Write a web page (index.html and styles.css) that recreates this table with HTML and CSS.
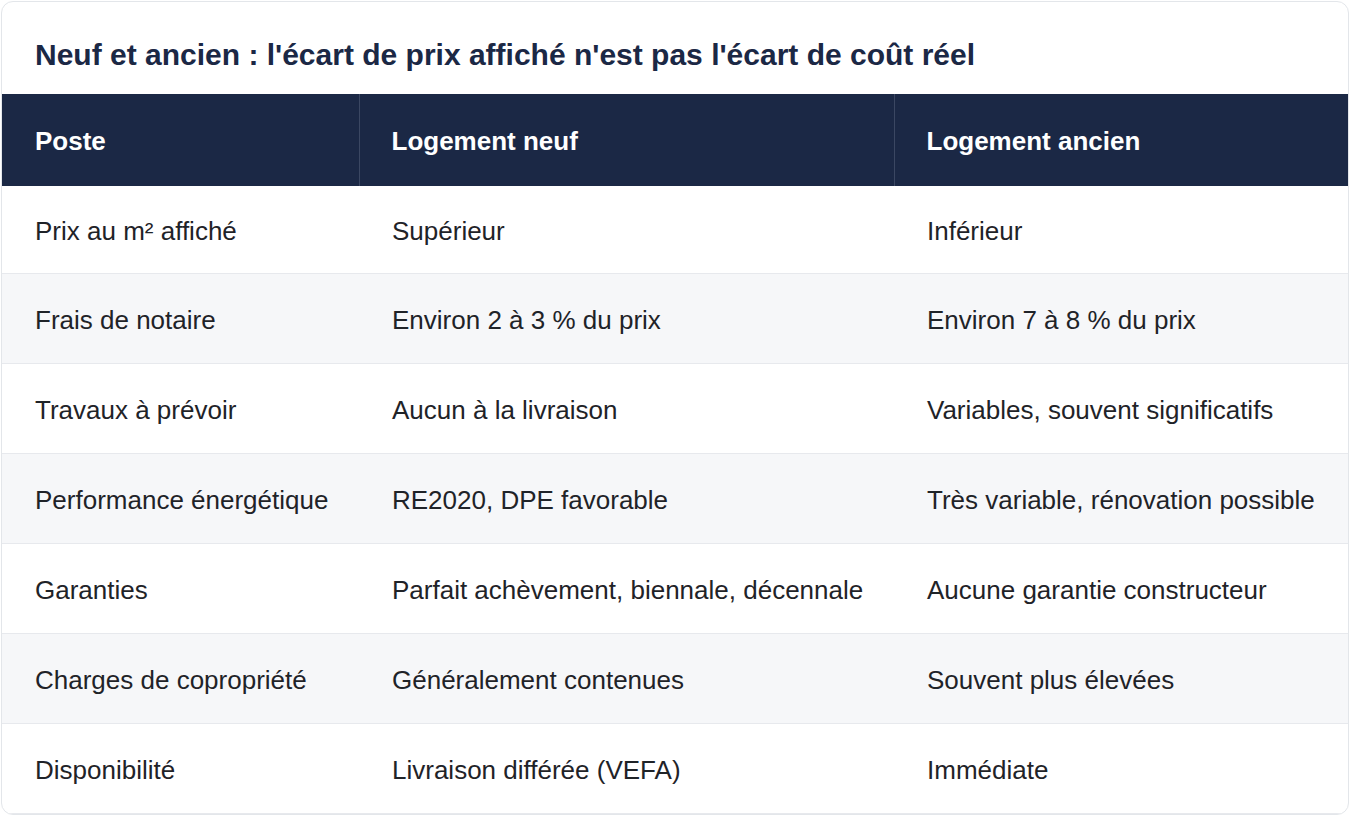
FILE: index.html
```html
<!DOCTYPE html>
<html lang="fr">
<head>
<meta charset="utf-8">
<link rel="stylesheet" href="styles.css">
</head>
<body>
<div class="card">
  <h2 class="title">Neuf et ancien : l'écart de prix affiché n'est pas l'écart de coût réel</h2>
  <table class="cmp">
    <colgroup>
      <col class="c1"><col class="c2"><col class="c3">
    </colgroup>
    <thead>
      <tr><th>Poste</th><th>Logement neuf</th><th>Logement ancien</th></tr>
    </thead>
    <tbody>
      <tr><td>Prix au m² affiché</td><td>Supérieur</td><td>Inférieur</td></tr>
      <tr><td>Frais de notaire</td><td>Environ 2 à 3 % du prix</td><td>Environ 7 à 8 % du prix</td></tr>
      <tr><td>Travaux à prévoir</td><td>Aucun à la livraison</td><td>Variables, souvent significatifs</td></tr>
      <tr><td>Performance énergétique</td><td>RE2020, DPE favorable</td><td>Très variable, rénovation possible</td></tr>
      <tr><td>Garanties</td><td>Parfait achèvement, biennale, décennale</td><td>Aucune garantie constructeur</td></tr>
      <tr><td>Charges de copropriété</td><td>Généralement contenues</td><td>Souvent plus élevées</td></tr>
      <tr><td>Disponibilité</td><td>Livraison différée (VEFA)</td><td>Immédiate</td></tr>
    </tbody>
  </table>
</div>
</body>
</html>
```

FILE: styles.css
```css
html, body {
  margin: 0;
  padding: 0;
  background: #ffffff;
}
body {
  padding: 1px;
  font-family: "Liberation Sans", Arial, sans-serif;
}
.card {
  width: 1346px;
  border: 1px solid #e3e6ea;
  border-radius: 12px;
  overflow: hidden;
  background: #fff;
}
.title {
  margin: 0;
  height: 92px;
  box-sizing: border-box;
  padding: 36px 33px 0;
  font-size: 30px;
  line-height: 34px;
  font-weight: 700;
  color: #1b2845;
}
.cmp {
  width: 100%;
  border-collapse: collapse;
  table-layout: fixed;
}
.c1 { width: 357px; }
.c2 { width: 535px; }
.c3 { width: auto; }
.cmp th {
  background: #1b2845;
  color: #fff;
  text-align: left;
  font-size: 26px;
  font-weight: 700;
  height: 92px;
  padding: 3px 32px 0;
  box-sizing: border-box;
  border-left: 1px solid #3b4762;
}
.cmp th:first-child { border-left: none; padding-left: 33px; }
.cmp td {
  height: 90px;
  padding: 4px 20px 0 33px;
  box-sizing: border-box;
  font-size: 26px;
  color: #1f2328;
  border-top: 1px solid #e7e9ed;
}
.cmp tbody tr:first-child td { border-top: none; height: 87px; }
.cmp tbody tr:last-child td { border-bottom: 1px solid #e7e9ed; }
.cmp tbody tr:nth-child(even) td { background: #f6f7f9; }
```
